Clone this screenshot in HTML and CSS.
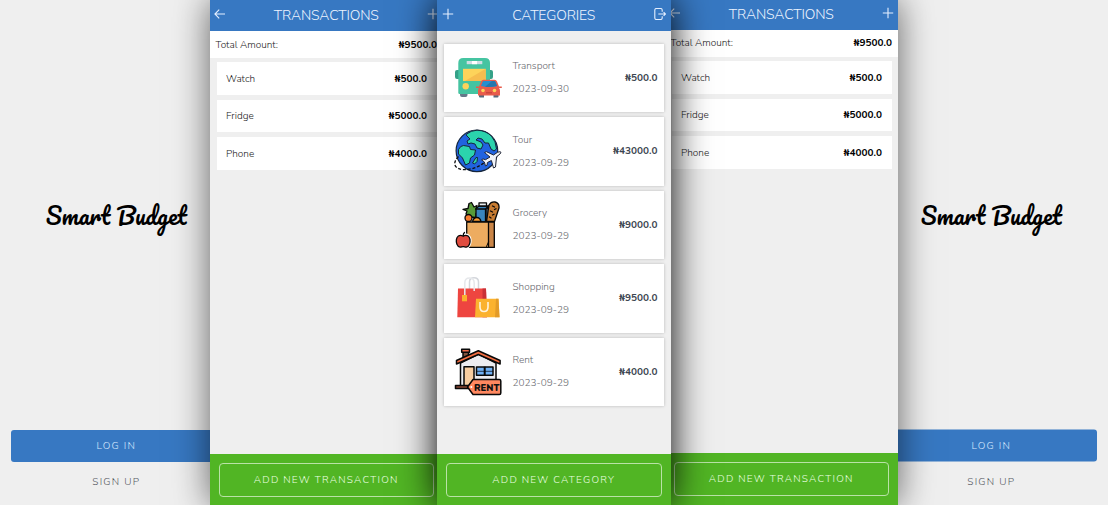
FILE: index.html
```
<!DOCTYPE html>
<html lang="en">
<head>
<meta charset="utf-8">
<title>Smart Budget</title>
<link rel="stylesheet" href="styles.css">
</head>
<body>
<main class="showcase">
  <section class="phone splash">
    <h1 class="logo">Smart Budget</h1>
    <div class="auth"><a class="login">LOG IN</a><a class="signup">SIGN UP</a></div>
  </section>

  <section class="phone transactions">
    <header class="bar">
      <svg class="nav" viewBox="0 0 12 12"><path d="M11 6H1M5.200 1.600L.9 6l4.300 4.400"/></svg>
      <h2>TRANSACTIONS</h2>
      <svg class="nav" viewBox="0 0 12 12"><path d="M6 .8v10.400M.8 6h10.400"/></svg>
    </header>
    <div class="total"><span>Total Amount:</span><b>₦9500.0</b></div>
    <ul class="entries">
      <li><span>Watch</span><b>₦500.0</b></li>
      <li><span>Fridge</span><b>₦5000.0</b></li>
      <li><span>Phone</span><b>₦4000.0</b></li>
    </ul>
    <footer class="foot"><a class="add">ADD NEW TRANSACTION</a></footer>
  </section>

  <section class="phone categories">
    <header class="bar">
      <svg class="nav" viewBox="0 0 12 12"><path d="M6 .8v10.400M.8 6h10.400"/></svg>
      <h2>CATEGORIES</h2>
      <svg class="nav" viewBox="0 0 12 12"><path d="M8.200 3.800V2Q8.200.5 6.700.5H2.300Q.8.500.8 2v8q0 1.500 1.500 1.500h4.400q1.500 0 1.500-1.500V8.200M4.300 6h7.200M9.600 4.100L11.500 6 9.600 7.900"/></svg>
    </header>
    <div class="cards">
      <article class="card">
        <svg class="pic" viewBox="0 0 48 48">
          <path fill="#657889" d="M6 38h7.500v3q0 2-2 2H8q-2 0-2-2z"/>
          <path fill="#35a188" d="M1 18q0-2 2-2h2v9H3q-2 0-2-2zM35 16h2q2 0 2 2v5q0 2-2 2h-2z"/>
          <path fill="#45c4a1" d="M4.300 9q0-5 5-5H31q5 0 5 5v31H5.500q-1.200 0-1.200-1.200z"/>
          <path fill="#cfdde5" d="M12.700 7h15.600v3.200H12.700z"/><path fill="#fff" d="M18 7h5v3.200h-5z"/>
          <path fill="#fdd35a" d="M9 14.800h22.700V27H9z"/><path fill="#f6bd4f" d="M31.700 14.800V27H11z"/>
          <circle cx="11.700" cy="32.200" r="3.200" fill="#fdd35a"/>
          <path fill="#56697c" d="M25 40h5v3.500h-4q-1 0-1-1zM39.500 40h5v2.500q0 1-1 1h-4z"/>
          <path fill="#e95c4c" d="M22 32.500h3l2-5q.7-1.700 2.500-1.700h11q1.800 0 2.500 1.700l2 5h2.800V34H45q1 1 1 3v4.500H24V37q0-2 1-3h-3z"/>
          <path fill="#268fd0" d="M27 32l1.500-4q.4-1 1.500-1h10q1.100 0 1.500 1l1.500 4q-8 2-16 0z"/><path fill="#2577ad" d="M38 27h2q1.100 0 1.500 1l1.500 4q-6 1.500-12 .8z"/>
          <circle cx="29" cy="36.500" r="1.800" fill="#fdd35a"/><circle cx="40.500" cy="36.500" r="1.800" fill="#fdd35a"/><path fill="#cb473e" d="M32 38h6v1.500h-6z"/>
        </svg>
        <div class="info"><span>Transport</span><time>2023-09-30</time></div><b>₦500.0</b>
      </article>
      <article class="card">
        <svg class="pic" viewBox="0 0 48 48">
          <circle cx="22.900" cy="23.800" r="20.800" fill="#2163df" stroke="#15253b" stroke-width="1.200"/>
          <g fill="#2bd3ad" stroke="#15253b" stroke-width="1" stroke-linejoin="round">
            <path d="M12 7.500Q17 3.300 23 3.200q9 .3 14.500 6Q42 14 42.500 22l-2.500 2-3-2-2.500-6-3.500 0-3-4-4-1-2 2 5 2 2 3-2 4-4-1-2-4-4-1-3 1-1-3 3-2-3-3z"/>
            <path d="M4.500 22.500q2-4 5-4l6 1 1 3 5 .5-1 5-4 3-1 5-4 2-3-7-4-4z"/>
            <path d="M18.500 36l3.500-5.500h1.500l-.5 4-2.500 2.500z"/>
          </g>
          <path d="M4.500 29.500C-1 35-1 41 8 42.500c7 .6 16-1.500 23-7.500" fill="none" stroke="#111" stroke-width="1.300" stroke-dasharray="3 1.800"/>
          <path fill="#f1f4fa" stroke="#202536" stroke-width="1" stroke-linejoin="round" d="M30.500 25.500l2-.8 7 3.300 4-2.700q3-1.200 3.500 0 .2 1.300-4.500 4.500L41.500 40l-2 1-2.100-7.500-4 2-.3 2.700-1.600.7-1.200-4-2.800-2 1.500-1 2.500.8 4.500-2.700z"/>
        </svg>
        <div class="info"><span>Tour</span><time>2023-09-29</time></div><b>₦43000.0</b>
      </article>
      <article class="card">
        <svg class="pic" viewBox="0 0 48 48">
          <g stroke="#080808" stroke-width="1.300" stroke-linejoin="round" stroke-linecap="round">
            <path fill="#589b39" d="M16 16l-4-3 1-3-4-1.500 5-1 1-5 2.500-1 2.500 4.500 3-1.500-1 4 3.500 1-3.500 3v4z"/>
            <path fill="#3985bf" d="M22 7.500l3-2.500h10l-2 3v13H22z"/><path fill="#e9eff1" d="M25 1.800h7.500v3.200H25z"/>
            <path d="M22 8h9.500v12M31.500 8l3-3" fill="none"/>
            <path fill="#c77c32" d="M35 4q2-3.500 6-3 4.500 1 4 6l-4.500 13.500h-8z"/>
            <path d="M38.500 5l2 1M40.500 8.500l1.500-.8M36.500 10l2 1M38.500 14l1.500-.8M35.500 16l1.500 1" fill="none"/>
            <circle cx="14.500" cy="17" r="3.500" fill="#f77d2f"/><path fill="#fb9c31" d="M18.500 20.500q1-4 4.300-4t4.200 4z"/>
            <path fill="#edac60" d="M12.700 21h27.600v25.300H12.700z"/><path fill="#ca8547" d="M34.500 21h5.800v25.300h-5.800z"/>
            <path fill="none" stroke-width="1" d="M34.500 41l-2 4.500"/>
            <path fill="#df4c3f" stroke="#fff" stroke-width="3" d="M9.200 34.500c-9-3-8.500 10.500-3 12 1.500.3 1.500-.3 3-.3s1.500.6 3 .3c5.500-1.500 6-15-3-12z"/>
            <path fill="#df4c3f" d="M9.200 35c-8.500-3.500-8.500 9.500-3.500 11 1.500.3 2-.3 3.500-.3s2 .6 3.500.3c5-1.500 5-14.500-3.500-11z"/>
            <path d="M9.200 35q0-2.500 1.300-3.500" fill="none"/>
          </g>
        </svg>
        <div class="info"><span>Grocery</span><time>2023-09-29</time></div><b>₦9000.0</b>
      </article>
      <article class="card">
        <svg class="pic" viewBox="0 0 48 48">
          <path d="M15.500 17V8q0-4.300 4.500-4.300T24.500 8v7" stroke="#d4d7dc" stroke-width="1.500" fill="none"/>
          <path fill="#ee4540" d="M4 14.500h28l1 28.700H3.300z"/><path fill="#c93036" d="M28.500 14.500H32l1 28.700h-4.500z"/>
          <path d="M10.800 23V9q0-5 4.700-5t4.700 5v8" stroke="#e6e8eb" stroke-width="1.500" fill="none"/>
          <path fill="#fbae2e" d="M8 21h5v6.300H8z"/>
          <path fill="#fbb22f" d="M22 24.800h22.500l1 18.400H21z"/><path fill="#e39b28" d="M42 24.800h2.500l1 18.400h-4.500z"/>
          <path d="M26 28v5q0 4.500 4 4.500t4-4.500v-5" fill="none" stroke="#fff3dc" stroke-width="1.600"/>
        </svg>
        <div class="info"><span>Shopping</span><time>2023-09-29</time></div><b>₦9500.0</b>
      </article>
      <article class="card">
        <svg class="pic" viewBox="0 0 48 48">
          <g stroke="#080808" stroke-width="1.500" stroke-linejoin="round">
            <path fill="#83533e" d="M9 4h5.500v9H9z"/><path fill="#ef6848" d="M7.700 1.200h7.800v3H7.700z"/>
            <path fill="#ececf0" d="M6.500 15l18-9 17.500 9v24H6.500z"/>
            <path fill="#f26e42" d="M2.500 16v-3.500L24.300 2.800l21.800 9.700V16L24.300 6.500z"/>
            <path fill="#f7cda0" d="M10 18.700h10v20H10z"/><path fill="#6fb0f5" d="M22.500 19h16.500v8.300H22.500z"/>
            <path d="M30.700 18.700v8.800" fill="none" stroke-width="2"/><path d="M22 23.300h17.300" fill="none" stroke-width=".7"/>
            <path fill="#8b4935" d="M1.500 37.500H14v3H1.500z"/>
            <path fill="#ff8860" d="M19 31.500h26.300q1.500 0 1.500 1.500v12q0 1.500-1.500 1.500H19L13.500 39z"/>
          </g>
          <circle cx="17.300" cy="39" r="1" fill="#fff"/>
          <text class="tag" x="20" y="42.700" textLength="25.500" lengthAdjust="spacingAndGlyphs">RENT</text>
        </svg>
        <div class="info"><span>Rent</span><time>2023-09-29</time></div><b>₦4000.0</b>
      </article>
    </div>
    <footer class="foot"><a class="add">ADD NEW CATEGORY</a></footer>
  </section>

  <section class="phone transactions raised">
    <header class="bar">
      <svg class="nav" viewBox="0 0 12 12"><path d="M11 6H1M5.200 1.600L.9 6l4.300 4.400"/></svg>
      <h2>TRANSACTIONS</h2>
      <svg class="nav" viewBox="0 0 12 12"><path d="M6 .8v10.400M.8 6h10.400"/></svg>
    </header>
    <div class="total"><span>Total Amount:</span><b>₦9500.0</b></div>
    <ul class="entries">
      <li><span>Watch</span><b>₦500.0</b></li>
      <li><span>Fridge</span><b>₦5000.0</b></li>
      <li><span>Phone</span><b>₦4000.0</b></li>
    </ul>
    <footer class="foot"><a class="add">ADD NEW TRANSACTION</a></footer>
  </section>

  <section class="phone splash raised">
    <h1 class="logo">Smart Budget</h1>
    <div class="auth"><a class="login">LOG IN</a><a class="signup">SIGN UP</a></div>
  </section>
</main>
</body>
</html>
```
FILE: styles.css
```
* { box-sizing: border-box; }
body { margin: 0; background: #efefef; font-family: Nunito, "Open Sans", sans-serif; font-size: 10px; color: #222; }
h1, h2, ul { margin: 0; padding: 0; list-style: none; }
.showcase { display: flex; width: 1108px; height: 505px; overflow: hidden; }
.phone { flex: none; display: flex; flex-direction: column; width: 233.500px; height: 505px; background: #efefef; }
.phone + .phone { margin-left: -6px; }
.phone.splash + .phone { margin-left: -24px; }
.phone + .phone.splash { margin-left: -23px; }
.transactions { position: relative; z-index: 1; box-shadow: 0 0 34px rgba(0,0,0,.6); }
.categories { position: relative; z-index: 2; box-shadow: 0 0 36px #000; }

.bar { display: flex; align-items: center; justify-content: space-between; height: 31px; padding: 0 4.500px 3px; background: #3778c2; color: #edf4ff; }
.bar h2 { font-size: 14px; font-weight: 300; line-height: 20px; padding-top: 4px; letter-spacing: -.15px; }
.nav { width: 12px; height: 12px; fill: none; stroke: #e5efff; stroke-width: 1.100; }
.total { display: flex; justify-content: space-between; align-items: center; height: 27px; padding: 0 6px 0; background: #fff; }
.entries { display: grid; gap: 5px; padding: 4px 6.500px 0 7px; }
.entries li { display: flex; justify-content: space-between; align-items: center; height: 32.500px; padding: .5px 9.500px 0; background: #fff; }
.entries span, .total span { font-weight: 350; }
b { font-weight: 700; color: #000; }
.foot { margin-top: auto; height: 51px; padding: 9px; background: #51b524; }
.add { display: flex; align-items: center; justify-content: center; height: 34px; border: 1px solid #b9e2a7; border-radius: 4px; color: #e9ffe0; font-size: 10px; font-weight: 350; letter-spacing: 1.250px; }
.transactions.raised .bar { height: 30px; padding-bottom: 4px; }
.transactions.raised .bar h2 { padding-top: 3.500px; }
.transactions.raised .total { padding-bottom: 1px; }
.raised .foot { height: 52px; }

.cards { display: grid; gap: 5px; padding: 12.500px 7px 0; }
.card { display: flex; align-items: center; height: 68.500px; padding: 0 6px 0 10px; background: #fff; box-shadow: 0 0 3px rgba(0,0,0,.23); }
.pic { width: 48px; height: 48px; }
.info { display: grid; gap: 9px; margin-left: 10.500px; line-height: 14px; font-weight: 350; color: #68696f; }
.card b { margin-left: auto; color: #3d4651; }
.tag { font: 900 9.500px Nunito, Roboto, sans-serif; fill: #111; }

.splash { justify-content: space-between; padding: 195px 11.500px 12.500px 10.500px; }
.logo { align-self: center; font: 400 23px/40px Pacifico, Lato, cursive; color: #000; white-space: nowrap; }
.auth { display: grid; gap: 8.500px; text-align: center; font-weight: 350; letter-spacing: 1.250px; }
.login { height: 32px; line-height: 32px; border-radius: 3px; background: #3778c2; color: #d8e8ff; }
.signup { line-height: 22px; color: #55585f; }
.splash.raised .auth { transform: translateY(-.5px); }
```
